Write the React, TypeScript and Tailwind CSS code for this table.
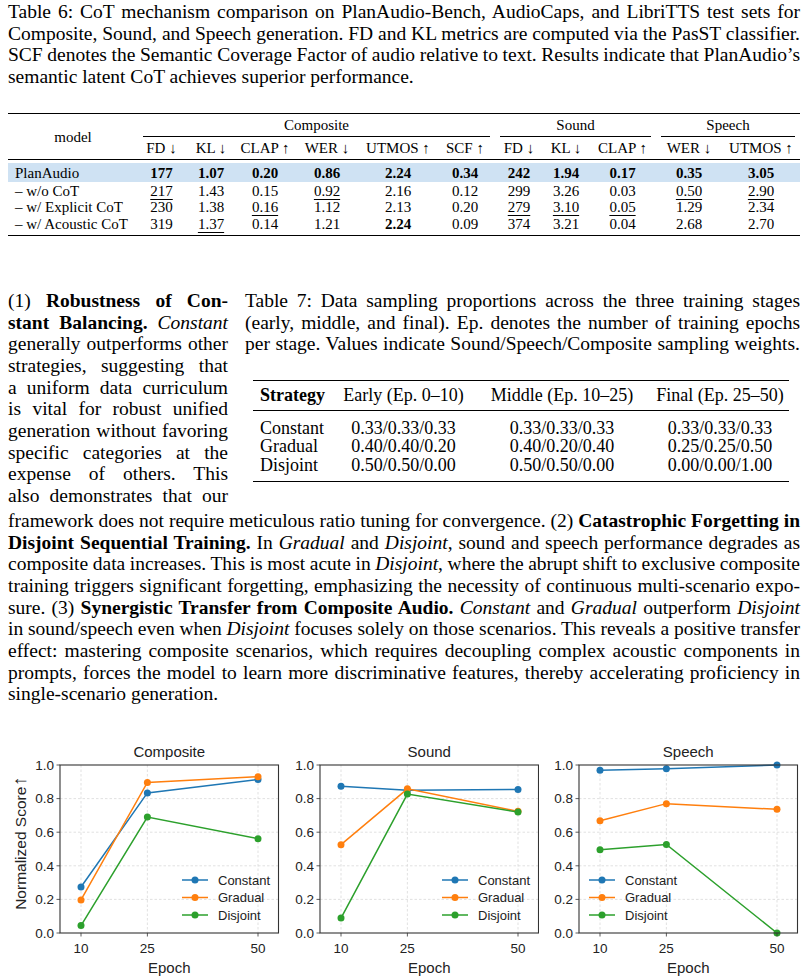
import React from 'react';

const T6_COLS = "grid grid-cols-[130px_47px_52px_56px_68px_74px_60px_48px_46px_67px_66px_78px]";
const T7_COLS = "grid grid-cols-[81px_139px_178px_138px]";

// one typeset line, stretched to the column like the LaTeX source
function Line({ children }: { children: React.ReactNode }) {
    return <div className="text-justify [text-align-last:justify] [word-spacing:-1px]">{children}</div>;
}

const t6Heads = ['FD ↓', 'KL ↓', 'CLAP ↑', 'WER ↓', 'UTMOS ↑', 'SCF ↑', 'FD ↓', 'KL ↓', 'CLAP ↑', 'WER ↓', 'UTMOS ↑'];

// * = bold, _ = underlined (second best)
const t6Rows = [
    { name: 'PlanAudio', cells: ['*177', '*1.07', '*0.20', '*0.86', '*2.24', '*0.34', '*242', '*1.94', '*0.17', '*0.35', '*3.05'] },
    { name: '– w/o CoT', cells: ['_217', '1.43', '0.15', '_0.92', '2.16', '0.12', '299', '3.26', '0.03', '_0.50', '_2.90'] },
    { name: '– w/ Explicit CoT', cells: ['230', '1.38', '_0.16', '1.12', '2.13', '0.20', '_279', '_3.10', '_0.05', '1.29', '2.34'] },
    { name: '– w/ Acoustic CoT', cells: ['319', '_1.37', '0.14', '1.21', '*2.24', '0.09', '374', '3.21', '0.04', '2.68', '2.70'] },
];

function Cell({ raw }: { raw: string }) {
    const bold = raw.startsWith('*');
    const under = raw.startsWith('_');
    const text = bold || under ? raw.slice(1) : raw;
    return (
        <div className="flex justify-center whitespace-nowrap">
            <span className={`${bold ? 'font-bold' : ''} ${under ? 'underline decoration-1 underline-offset-[3px]' : ''}`}>{text}</span>
        </div>
    );
}

function Table6() {
    return (
        <div className="mt-[25px] border-t-[1.5px] border-b-[1.5px] border-black pb-[3px] text-[15px] leading-[16px]">
            <div className={`${T6_COLS} grid-rows-[23px_22.5px] border-b border-black`}>
                <div className="row-span-2 flex items-center justify-center">model</div>
                <div className="col-span-6 mx-[5px] flex items-center justify-center border-b border-black">Composite</div>
                <div className="col-span-3 mx-[5px] flex items-center justify-center border-b border-black">Sound</div>
                <div className="col-span-2 mx-[5px] flex items-center justify-center border-b border-black">Speech</div>
                {t6Heads.map((h, i) => (
                    <div key={i} className="flex items-center justify-center whitespace-nowrap">{h}</div>
                ))}
            </div>
            {t6Rows.map((r, i) => (
                <div key={r.name}
                     className={`${T6_COLS} items-center ${i === 0 ? 'mt-[3px] h-[19px] bg-[#cfe2f3]' : 'h-[16.5px]'}`}>
                    <div className="pl-[7px] whitespace-nowrap">{r.name}</div>
                    {r.cells.map((c, j) => <Cell key={j} raw={c}/>)}
                </div>
            ))}
        </div>
    );
}

const t7Rows = [
    ['Constant', '0.33/0.33/0.33', '0.33/0.33/0.33', '0.33/0.33/0.33'],
    ['Gradual', '0.40/0.40/0.20', '0.40/0.20/0.40', '0.25/0.25/0.50'],
    ['Disjoint', '0.50/0.50/0.00', '0.50/0.50/0.00', '0.00/0.00/1.00'],
];

function Table7() {
    return (
        <div className="w-[555px] shrink-0">
            <Line>Table 7: Data sampling proportions across the three training stages</Line>
            <Line>(early, middle, and final). Ep. denotes the number of training epochs</Line>
            <Line>per stage. Values indicate Sound/Speech/Composite sampling weights.</Line>
            <div className="ml-2 mt-[25px] w-[536px] border-t-[1.5px] border-b-[1.5px] border-black pb-[7px] text-[18px] leading-[18.5px]">
                <div className={`${T7_COLS} h-[30px] items-center border-b border-black`}>
                    <div className="pl-[7px] font-bold">Strategy</div>
                    <div className="text-center whitespace-nowrap">Early (Ep. 0–10)</div>
                    <div className="text-center whitespace-nowrap">Middle (Ep. 10–25)</div>
                    <div className="text-center whitespace-nowrap">Final (Ep. 25–50)</div>
                </div>
                <div className="pt-[8px]">
                    {t7Rows.map(r => (
                        <div key={r[0]} className={`${T7_COLS} h-[18.5px] items-center`}>
                            <div className="pl-[7px]">{r[0]}</div>
                            <div className="text-center">{r[1]}</div>
                            <div className="text-center">{r[2]}</div>
                            <div className="text-center">{r[3]}</div>
                        </div>
                    ))}
                </div>
            </div>
        </div>
    );
}

type Series = { name: string; color: string; values: number[] };

const EPOCHS = [10, 25, 50];
const BLUE = '#1f77b4';
const ORANGE = '#ff7f0e';
const GREEN = '#2ca02c';

const charts: { title: string; legend: 'right' | 'left'; series: Series[] }[] = [
    {
        title: 'Composite', legend: 'right', series: [
            { name: 'Constant', color: BLUE, values: [0.274, 0.834, 0.914] },
            { name: 'Gradual', color: ORANGE, values: [0.197, 0.896, 0.93] },
            { name: 'Disjoint', color: GREEN, values: [0.044, 0.69, 0.561] },
        ]
    },
    {
        title: 'Sound', legend: 'right', series: [
            { name: 'Constant', color: BLUE, values: [0.874, 0.849, 0.854] },
            { name: 'Gradual', color: ORANGE, values: [0.526, 0.858, 0.724] },
            { name: 'Disjoint', color: GREEN, values: [0.089, 0.827, 0.72] },
        ]
    },
    {
        title: 'Speech', legend: 'left', series: [
            { name: 'Constant', color: BLUE, values: [0.969, 0.977, 1.0] },
            { name: 'Gradual', color: ORANGE, values: [0.668, 0.77, 0.736] },
            { name: 'Disjoint', color: GREEN, values: [0.496, 0.527, 0.0] },
        ]
    },
];

function Chart({ title, series, legend, withLabel }: {
    title: string; series: Series[]; legend: 'right' | 'left'; withLabel: boolean
}) {
    const bx = withLabel ? 60 : 40;
    const bw = 218.5;
    const top = 26;
    const bh = 168;
    const X = (e: number) => bx + 21 + (e - 10) * 4.425;
    const Y = (v: number) => top + (1 - v) * bh;
    const lx = legend === 'right' ? bx + 122 : bx + 10;
    const yTicks = [0, 0.2, 0.4, 0.6, 0.8, 1.0];

    return (
        <svg width={bx + bw + 1} height={240} className="shrink-0 font-['Liberation_Sans',Arial,sans-serif]">
            {/* grid */}
            {yTicks.slice(1, 5).map(t => (
                <line key={t} x1={bx} x2={bx + bw} y1={Y(t)} y2={Y(t)} stroke="#d9d9d9" strokeWidth={0.8} strokeDasharray="2.5 2"/>
            ))}
            {EPOCHS.map(e => (
                <line key={e} x1={X(e)} x2={X(e)} y1={top} y2={top + bh} stroke="#d9d9d9" strokeWidth={0.8} strokeDasharray="2.5 2"/>
            ))}
            {/* data */}
            {series.map(s => (
                <g key={s.name}>
                    <polyline fill="none" stroke={s.color} strokeWidth={1.5}
                              points={s.values.map((v, i) => `${X(EPOCHS[i])},${Y(v)}`).join(' ')}/>
                    {s.values.map((v, i) => <circle key={i} cx={X(EPOCHS[i])} cy={Y(v)} r={3.5} fill={s.color}/>)}
                </g>
            ))}
            {/* axes box */}
            <rect x={bx} y={top} width={bw} height={bh} fill="none" stroke="#333" strokeWidth={1.1}/>
            {yTicks.map(t => (
                <g key={t}>
                    <line x1={bx - 3.5} x2={bx} y1={Y(t)} y2={Y(t)} stroke="#333" strokeWidth={0.8}/>
                    <text x={bx - 6} y={Y(t) + 4.8} textAnchor="end" className="text-[13.5px] fill-[#222]">{t.toFixed(1)}</text>
                </g>
            ))}
            {EPOCHS.map(e => (
                <g key={e}>
                    <line x1={X(e)} x2={X(e)} y1={top + bh} y2={top + bh + 3.5} stroke="#333" strokeWidth={0.8}/>
                    <text x={X(e)} y={214} textAnchor="middle" className="text-[13.5px] fill-[#222]">{e}</text>
                </g>
            ))}
            {/* legend */}
            {series.map((s, i) => {
                const ly = 141 + i * 17.5;
                return (
                    <g key={s.name}>
                        <line x1={lx} x2={lx + 26} y1={ly} y2={ly} stroke={s.color} strokeWidth={1.5}/>
                        <circle cx={lx + 13} cy={ly} r={3.5} fill={s.color}/>
                        <text x={lx + 36} y={ly + 4.6} className="text-[13px] fill-[#222]">{s.name}</text>
                    </g>
                );
            })}
            <text x={bx + bw / 2} y={18} textAnchor="middle" className="text-[15px] fill-[#222]">{title}</text>
            <text x={bx + bw / 2} y={234} textAnchor="middle" className="text-[15px] fill-[#222]">Epoch</text>
            {withLabel && (
                <text transform={`translate(26,${top + bh / 2 - 6}) rotate(-90)`} textAnchor="middle"
                      className="text-[15.5px] fill-[#222]">Normalized Score<tspan dx={1} className="text-[19px]">↑</tspan></text>
            )}
        </svg>
    );
}

function App() {
    return (
        <main className="w-[809px] bg-white text-black font-['Liberation_Serif','Times_New_Roman',serif]">
            <div className="pl-2 pr-[9px] pt-px text-[19.5px] leading-[21.7px]">
                <Line>Table 6: CoT mechanism comparison on PlanAudio-Bench, AudioCaps, and LibriTTS test sets for</Line>
                <Line>Composite, Sound, and Speech generation. FD and KL metrics are computed via the PasST classifier.</Line>
                <Line>SCF denotes the Semantic Coverage Factor of audio relative to text. Results indicate that PlanAudio’s</Line>
                <div>semantic latent CoT achieves superior performance.</div>

                <Table6/>

                <div className="mt-[54px] flex gap-[17px]">
                    <div className="w-[220px] shrink-0">
                        <Line>(1) <b>Robustness of Con-</b></Line>
                        <Line><b>stant Balancing.</b> <i>Constant</i></Line>
                        <Line>generally outperforms other</Line>
                        <Line>strategies, suggesting that</Line>
                        <Line>a uniform data curriculum</Line>
                        <Line>is vital for robust unified</Line>
                        <Line>generation without favoring</Line>
                        <Line>specific categories at the</Line>
                        <Line>expense of others. This</Line>
                        <Line>also demonstrates that our</Line>
                    </div>
                    <Table7/>
                </div>

                <div className="mt-[3px]">
                    <Line>framework does not require meticulous ratio tuning for convergence. (2) <b>Catastrophic Forgetting in</b></Line>
                    <Line><b>Disjoint Sequential Training.</b> In <i>Gradual</i> and <i>Disjoint</i>, sound and speech performance degrades as</Line>
                    <Line>composite data increases. This is most acute in <i>Disjoint</i>, where the abrupt shift to exclusive composite</Line>
                    <Line>training triggers significant forgetting, emphasizing the necessity of continuous multi-scenario expo-</Line>
                    <Line>sure. (3) <b>Synergistic Transfer from Composite Audio.</b> <i>Constant</i> and <i>Gradual</i> outperform <i>Disjoint</i></Line>
                    <Line>in sound/speech even when <i>Disjoint</i> focuses solely on those scenarios. This reveals a positive transfer</Line>
                    <Line>effect: mastering composite scenarios, which requires decoupling complex acoustic components in</Line>
                    <Line>prompts, forces the model to learn more discriminative features, thereby accelerating proficiency in</Line>
                    <div>single-scenario generation.</div>
                </div>
            </div>

            <div className="mt-[34px] flex">
                {charts.map((c, i) => (
                    <Chart key={c.title} title={c.title} series={c.series} legend={c.legend} withLabel={i === 0}/>
                ))}
            </div>
        </main>
    );
}

export default App;
